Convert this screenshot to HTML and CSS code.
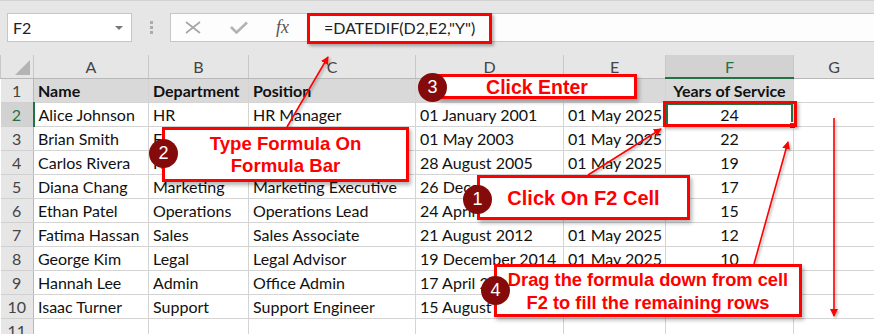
FILE: index.html
```html
<!DOCTYPE html>
<html lang="en">
<head>
    <meta charset="UTF-8">
    <title>DATEDIF Years of Service</title>
    <link rel="stylesheet" href="styles.css">
</head>
<body>
    <div class="toolbar">
        <div class="name-box"><span>F2</span><span class="caret"></span></div>
        <div class="grip"><i></i><i></i><i></i></div>
        <div class="formula-bar">
            <div class="fx-buttons">
                <svg class="icon-cancel" width="16" height="13" viewBox="0 0 16 13"><path d="M1 1 L15 12 M15 1 L1 12" stroke="#a6a6a6" stroke-width="1.6" fill="none"/></svg>
                <svg class="icon-check" width="18" height="13" viewBox="0 0 18 13"><path d="M1 6 L6.5 11.5 L17 1.5" stroke="#b3b3b3" stroke-width="2.6" fill="none"/></svg>
                <span class="fx">fx</span>
            </div>
            <div class="formula">=DATEDIF(D2,E2,"Y")</div>
        </div>
    </div>

    <table class="grid">
        <colgroup>
            <col style="width:33px"><col style="width:115px"><col style="width:100px"><col style="width:167px">
            <col style="width:148px"><col style="width:102px"><col style="width:128px"><col style="width:81px">
        </colgroup>
        <thead>
            <tr>
                <th class="corner"><span class="select-all"></span></th>
                <th>A</th><th>B</th><th>C</th><th>D</th><th>E</th><th class="active">F</th><th>G</th>
            </tr>
        </thead>
        <tbody>
            <tr class="title-row">
                <th>1</th><td>Name</td><td>Department</td><td>Position</td><td></td><td></td><td class="num">Years of Service</td><td class="blank"></td>
            </tr>
            <tr>
                <th class="active">2</th><td>Alice Johnson</td><td>HR</td><td>HR Manager</td><td>01 January 2001</td><td>01 May 2025</td><td class="num selected">24</td><td></td>
            </tr>
            <tr>
                <th>3</th><td>Brian Smith</td><td>Finance</td><td>Financial Analyst</td><td>01 May 2003</td><td>01 May 2025</td><td class="num">22</td><td></td>
            </tr>
            <tr>
                <th>4</th><td>Carlos Rivera</td><td>IT</td><td>IT Specialist</td><td>28 August 2005</td><td>01 May 2025</td><td class="num">19</td><td></td>
            </tr>
            <tr>
                <th>5</th><td>Diana Chang</td><td>Marketing</td><td>Marketing Executive</td><td>26 December 2007</td><td>01 May 2025</td><td class="num">17</td><td></td>
            </tr>
            <tr>
                <th>6</th><td>Ethan Patel</td><td>Operations</td><td>Operations Lead</td><td>24 April 2010</td><td>01 May 2025</td><td class="num">15</td><td></td>
            </tr>
            <tr>
                <th>7</th><td>Fatima Hassan</td><td>Sales</td><td>Sales Associate</td><td>21 August 2012</td><td>01 May 2025</td><td class="num">12</td><td></td>
            </tr>
            <tr>
                <th>8</th><td>George Kim</td><td>Legal</td><td>Legal Advisor</td><td>19 December 2014</td><td>01 May 2025</td><td class="num">10</td><td></td>
            </tr>
            <tr>
                <th>9</th><td>Hannah Lee</td><td>Admin</td><td>Office Admin</td><td>17 April 2016</td><td>01 May 2025</td><td class="num">9</td><td></td>
            </tr>
            <tr>
                <th>10</th><td>Isaac Turner</td><td>Support</td><td>Support Engineer</td><td>15 August 2018</td><td>01 May 2025</td><td class="num">6</td><td></td>
            </tr>
            <tr>
                <th>11</th><td></td><td></td><td></td><td></td><td></td><td></td><td></td>
            </tr>
        </tbody>
    </table>

    <!-- annotations drawn over the sheet -->
    <div class="mark mark-formula"></div>
    <div class="mark mark-cell"></div>

    <svg class="arrows" width="874" height="334" viewBox="0 0 874 334">
        <defs>
            <marker id="head" markerWidth="8" markerHeight="8" refX="7" refY="4" orient="auto" markerUnits="userSpaceOnUse">
                <path d="M0 0 L8 4 L0 8 Z" fill="#ff0000"/>
            </marker>
            <filter id="shade" x="-20%" y="-20%" width="140%" height="140%">
                <feDropShadow dx="1.5" dy="1.5" stdDeviation="1" flood-color="#000" flood-opacity="0.3"/>
            </filter>
        </defs>
        <g stroke="#ff0000" stroke-width="1.6" fill="none" marker-end="url(#head)" filter="url(#shade)">
            <line x1="287" y1="127" x2="328" y2="57"/>
            <line x1="588" y1="175" x2="661" y2="129"/>
            <line x1="754" y1="264" x2="788" y2="142"/>
            <line x1="834" y1="118" x2="834" y2="316"/>
        </g>
    </svg>

    <div class="callout callout-1">Click On F2 Cell</div>
    <div class="step step-1">1</div>

    <div class="callout callout-2">Type Formula On<br>Formula Bar</div>
    <div class="step step-2">2</div>

    <div class="callout callout-3">Click Enter</div>
    <div class="step step-3">3</div>

    <div class="callout callout-4">Drag the formula down from cell<br>F2 to fill the remaining rows</div>
    <div class="step step-4">4</div>
</body>
</html>
```

FILE: styles.css
```css
* {
    box-sizing: border-box;
}
body {
    margin: 0;
    width: 874px;
    height: 334px;
    overflow: hidden;
    position: relative;
    background: #fff;
    font-family: Lato, "Open Sans", sans-serif;
    color: #000;
}

/* name box + formula bar */
.toolbar {
    height: 55px;
    background: #e6e6e6;
    border-top: 1px solid #d2d2d2;
    display: flex;
    align-items: flex-start;
    padding: 12px 0 0 7px;
}
.name-box {
    width: 125px;
    height: 29px;
    background: #fff;
    border: 1px solid #c6c6c6;
    display: flex;
    align-items: center;
    justify-content: space-between;
    padding: 0 8px 0 5px;
    font-size: 16px;
    color: #222;
}
.caret {
    width: 0;
    height: 0;
    border-left: 4px solid transparent;
    border-right: 4px solid transparent;
    border-top: 4px solid #777;
}
.grip {
    width: 38px;
    height: 29px;
    display: flex;
    flex-direction: column;
    align-items: center;
    justify-content: center;
    gap: 2px;
}
.grip i {
    width: 3px;
    height: 3px;
    background: #ababab;
}
.formula-bar {
    flex: 1;
    height: 29px;
    background: #fdfdfd;
    border: 1px solid #c6c6c6;
    border-right: none;
    display: flex;
    align-items: center;
}
.fx-buttons {
    width: 136px;
    display: flex;
    align-items: center;
}
.icon-cancel {
    margin-left: 14px;
}
.icon-check {
    margin-left: 29px;
}
.fx {
    margin-left: 28px;
    font-family: "Liberation Serif", serif;
    font-style: italic;
    font-size: 18px;
    color: #555;
}
.formula {
    padding-left: 17px;
    font-size: 16px;
    color: #222;
}

/* worksheet grid */
.grid {
    border-collapse: collapse;
    table-layout: fixed;
    width: 874px;
    font-size: 16px;
}
.grid thead tr {
    height: 23px;
}
.grid tbody tr {
    height: 24px;
}
.grid th {
    background: #e6e6e6;
    font-weight: normal;
    color: #444;
    text-align: center;
    padding: 0;
    border: 1px solid #c8c8c8;
    border-top: none;
}
.grid thead th {
    border-bottom: 1px solid #b8b8b8;
}
.grid tbody th {
    border-left: none;
    border-right: 1px solid #b8b8b8;
    border-bottom: 1px solid #d0d0d0;
}
.grid thead th.active {
    background: #d2d2d2;
    color: #217346;
    border-bottom: 2px solid #217346;
}
.grid tbody th.active {
    background: #d2d2d2;
    color: #217346;
    border-right: 2px solid #217346;
}
.corner {
    position: relative;
}
.select-all {
    position: absolute;
    right: 3px;
    bottom: 3px;
    width: 0;
    height: 0;
    border-left: 15px solid transparent;
    border-bottom: 15px solid #b4b4b4;
}
.grid td {
    border: 1px solid #d4d4d4;
    padding: 0 4px;
    white-space: nowrap;
    overflow: hidden;
    color: #111;
}
.grid td.num {
    text-align: center;
}
.title-row td {
    background: #d9d9d9;
    font-weight: bold;
}
.title-row td.blank {
    background: #fff;
}
.grid td.selected {
    position: relative;
    overflow: visible;
    box-shadow: inset 0 0 0 2px #217346;
}
.grid td.selected::after {
    content: "";
    position: absolute;
    right: -3px;
    bottom: -3px;
    width: 5px;
    height: 5px;
    background: #217346;
    border: 1px solid #fff;
}

/* annotations */
.mark {
    position: absolute;
    border: 3px solid #ff0000;
    box-shadow: 2px 2px 3px rgba(0, 0, 0, 0.3);
}
.mark-formula {
    left: 307px;
    top: 13px;
    width: 185px;
    height: 31px;
}
.mark-cell {
    left: 663px;
    top: 101px;
    width: 134px;
    height: 26px;
}
.arrows {
    position: absolute;
    left: 0;
    top: 0;
    pointer-events: none;
}
.callout {
    position: absolute;
    background: #fff;
    border: 3px solid #ff0000;
    color: #ff0000;
    font-family: "Liberation Sans", Arial, sans-serif;
    font-weight: bold;
    font-size: 18px;
    line-height: 22px;
    text-align: center;
    display: flex;
    align-items: center;
    justify-content: center;
    box-shadow: 2px 3px 4px rgba(0, 0, 0, 0.3);
}
.callout-1 {
    left: 477px;
    top: 175px;
    width: 213px;
    height: 45px;
    font-size: 20px;
}
.callout-2 {
    left: 162px;
    top: 127px;
    width: 247px;
    height: 55px;
    font-size: 18.6px;
}
.callout-3 {
    left: 437px;
    top: 74px;
    width: 200px;
    height: 25px;
    font-size: 19.5px;
}
.callout-4 {
    left: 494px;
    top: 264px;
    width: 308px;
    height: 53px;
    font-size: 18.3px;
    line-height: 23px;
}
.step {
    position: absolute;
    width: 29px;
    height: 29px;
    border-radius: 50%;
    background: #850b0b;
    color: #fff;
    font-family: "Liberation Sans", Arial, sans-serif;
    font-size: 18px;
    line-height: 29px;
    text-align: center;
}
.step-1 {
    left: 463px;
    top: 185px;
}
.step-2 {
    left: 149px;
    top: 139px;
}
.step-3 {
    left: 418px;
    top: 73px;
}
.step-4 {
    left: 481px;
    top: 276px;
}
```
